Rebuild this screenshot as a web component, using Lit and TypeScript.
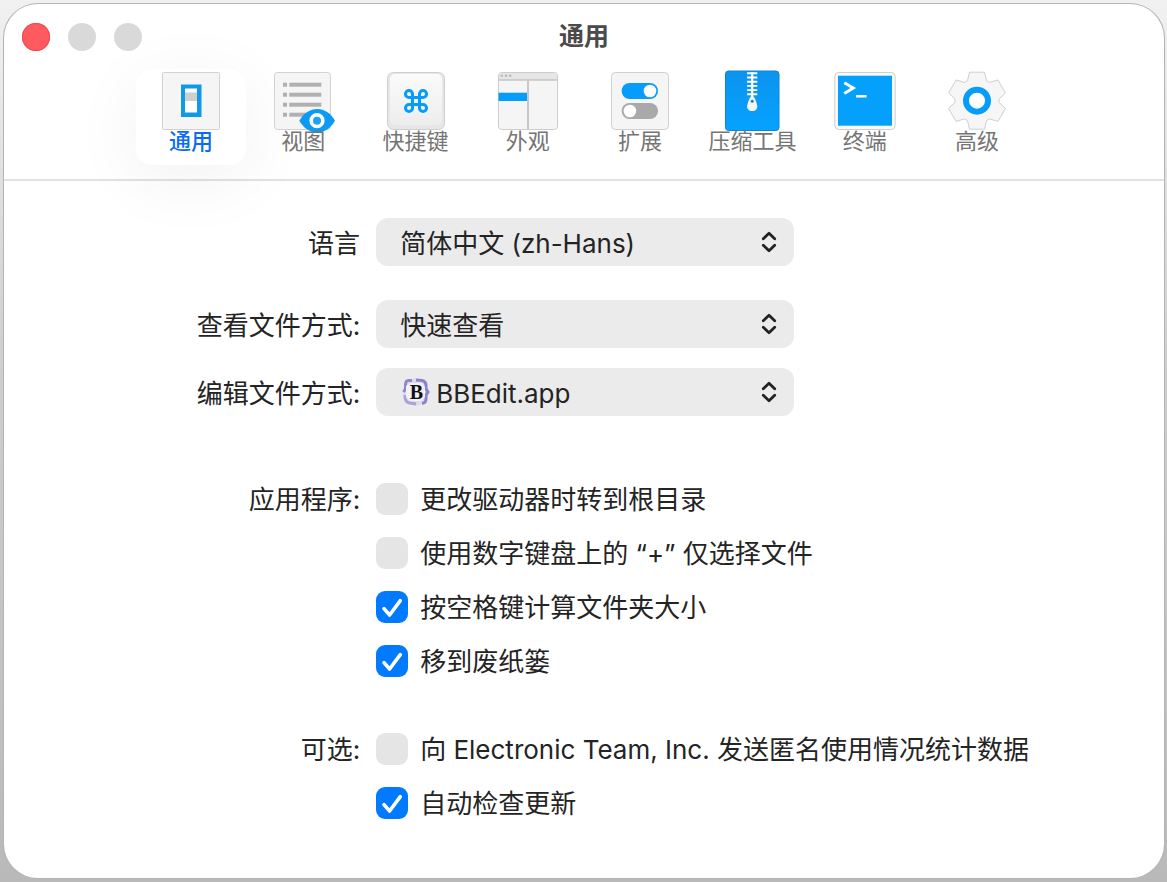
import { LitElement, html, svg, css, nothing, type TemplateResult } from "lit";
import { customElement, property, state } from "lit/decorators.js";
import { classMap } from "lit/directives/class-map.js";

const BLUE = "#069dfa";

/** Outline of a six-toothed gear centred on (cx, cy). */
function gearPath(cx: number, cy: number): string {
  const tooth = [
    [-9.5, -20],
    [-7.5, -28.5],
    [7.5, -28.5],
    [9.5, -20],
  ];
  const points: string[] = [];
  for (let k = 0; k < 6; k++) {
    const a = (k * Math.PI) / 3;
    for (const [x, y] of tooth) {
      const px = cx + x * Math.cos(a) - y * Math.sin(a);
      const py = cy + x * Math.sin(a) + y * Math.cos(a);
      points.push(`${px.toFixed(2)} ${py.toFixed(2)}`);
    }
  }
  return `M${points.join("L")}Z`;
}

const icons: Record<string, TemplateResult> = {
  general: svg`
    <rect x="2.5" y="2.5" width="57" height="57" rx="1" fill="#f5f5f5" stroke="#d2d2d2"/>
    <rect x="21" y="14.5" width="20.5" height="32.5" fill="#0f9ae6"/>
    <rect x="25" y="18.5" width="12" height="24" fill="#fff"/>
    <rect x="25" y="22.5" width="12" height="8.5" fill="#cfcfcf"/>`,
  view: svg`
    <rect x="2.5" y="2.5" width="56" height="57" rx="3" fill="#f5f5f5" stroke="#d2d2d2"/>
    ${[12.7, 22.7, 32.7, 42.7].map(
      (y) => svg`<rect x="11" y=${y} width="4" height="4" fill="#b0b0b0"/>
        <rect x="17.3" y=${y} width="32" height="4" fill="#b0b0b0"/>`
    )}
    <path d="M27.3 50.7C32 43 38 39 45.2 39S58.5 43 63 50.7C58.5 58.5 52.4 62.4 45.2 62.4S32 58.5 27.3 50.7Z" fill="#0b9bf5"/>
    <circle cx="45" cy="50.7" r="5.8" fill="#1ca2f5" stroke="#fff" stroke-width="3.6"/>`,
  shortcuts: svg`
    <defs><linearGradient id="key" x1="0" y1="0" x2="0" y2="1">
      <stop offset="0" stop-color="#fbfbfb"/><stop offset="1" stop-color="#ededed"/>
    </linearGradient></defs>
    <rect x="2.5" y="2.5" width="57" height="57" rx="6" fill="#e6e6e6" stroke="#cfcfcf"/>
    <rect x="5" y="4" width="52" height="51" rx="5" fill="url(#key)"/>
    <g transform="translate(31 31) scale(1.17) translate(-12 -12)">
      <path d="M18 3a3 3 0 0 0-3 3v12a3 3 0 1 0 3-3H6a3 3 0 1 0 3 3V6a3 3 0 1 0-3 3h12a3 3 0 1 0 0-6z" fill="none" stroke=${BLUE} stroke-width="2.6"/>
    </g>`,
  appearance: svg`
    <rect x="1.5" y="2.5" width="59" height="57" rx="3" fill="#f5f5f5" stroke="#cdcdcd"/>
    <path d="M2 10V5.5A2.5 2.5 0 0 1 4.5 3H57.5A2.5 2.5 0 0 1 60 5.5V10Z" fill="#e6e6e6"/>
    <path d="M2 10H60" stroke="#c4c4c4" stroke-width="1.4"/>
    <path d="M31 10V59" stroke="#c8c8c8" stroke-width="2"/>
    <rect x="1.5" y="22.7" width="28.5" height="8.3" fill=${BLUE}/>
    ${[4.8, 9, 13.2].map((x) => svg`<circle cx=${x} cy="5.8" r="1.3" fill="#b9b9b9"/>`)}`,
  extensions: svg`
    <rect x="2.5" y="2.5" width="57" height="57" rx="4" fill="#f5f5f5" stroke="#d0d0d0"/>
    <rect x="12.6" y="13" width="36.4" height="16" rx="8" fill=${BLUE}/>
    <circle cx="41" cy="21" r="6.3" fill="#fff"/>
    <rect x="12.6" y="33" width="36.4" height="16" rx="8" fill="#a9a9a9"/>
    <circle cx="20.9" cy="41" r="6.3" fill="#fff"/>`,
  archive: svg`
    <defs><linearGradient id="zip" x1="0" y1="0" x2="0" y2="1">
      <stop offset="0" stop-color="#0b94ee"/><stop offset="1" stop-color="#06a2ff"/>
    </linearGradient></defs>
    <rect x="4.5" y="1" width="53.5" height="59.5" rx="3" fill="url(#zip)" stroke="#0b86d6"/>
    ${[3.3, 7.5, 11.7, 15.9, 20.1, 24.3].map(
      (y) => svg`<path d="M26.1 ${y}H36.3" stroke="#fff" stroke-width="1.9"/>`
    )}
    <path d="M31.2 2.5V28" stroke="#fff" stroke-width="2.2"/>
    <path d="M31.2 26C33.5 26 35 31 36.2 35.5C36.8 39 34.5 41 31.2 41S25.6 39 26.2 35.5C27.4 31 28.9 26 31.2 26Z" fill="#f4f4f4"/>
    <circle cx="31.2" cy="31.3" r="1.5" fill="#1b7fc4"/>`,
  terminal: svg`
    <rect x=".8" y="2.5" width="60.4" height="57" rx="4" fill="#fafafa" stroke="#cfcfcf"/>
    <rect x="4" y="5.7" width="54" height="50" fill="#04a0fb"/>
    <path d="M10.3 12.8L19.2 18L10.3 23.6" fill="none" stroke="#fff" stroke-width="3"/>
    <path d="M22 26.2H32.6" stroke="#fff" stroke-width="2.5"/>`,
  advanced: svg`
    <path d=${gearPath(31, 30.7)} fill="#f6f6f6" stroke="#cfcfcf" stroke-linejoin="round"/>
    <circle cx="31" cy="30.7" r="11" fill="#fff" stroke=${BLUE} stroke-width="6"/>`,
};

const tabs = [
  { id: "general", label: "通用" },
  { id: "view", label: "视图" },
  { id: "shortcuts", label: "快捷键" },
  { id: "appearance", label: "外观" },
  { id: "extensions", label: "扩展" },
  { id: "archive", label: "压缩工具" },
  { id: "terminal", label: "终端" },
  { id: "advanced", label: "高级" },
];

const bbeditIcon = html`<svg class="app-icon" viewBox="0 0 28 30" aria-hidden="true">
  <path d="M7 3L14 1L22 4L27 12V18L22 26L14 29L6 27L1 18V12Z" fill="#dcdaf3"/>
  <path d="M10 3.5H6.5Q3.5 3.5 3.5 8V12L1.5 15" fill="none" stroke="#8f88c4" stroke-width="3"/>
  <path d="M14 3L20 3.5Q24 4.500 24 8V12L26 15L24 18V22Q24 26 20 26.500" fill="none" stroke="#8c84c6" stroke-width="3"/>
  <path d="M3 18V21Q4 26 8 26L14 27" fill="none" stroke="#a9a3da" stroke-width="3"/>
  <path d="M4 9L8 6H20L23 10V20L19 24H8L4 20Z" fill="#f1f0fb"/>
  <text x="14.500" y="21.500" text-anchor="middle" font-family="Liberation Serif, serif" font-weight="700" font-size="20" fill="#111">B</text>
</svg>`;

@customElement("popup-select")
class PopupSelect extends LitElement {
  @property() label = "";
  @property({ attribute: false }) options: string[] = [];
  @property({ attribute: false }) icon?: TemplateResult;

  static styles = css`
    .field {
      position: relative;
      display: flex;
    }
    select {
      appearance: none;
      width: 100%;
      height: 48px;
      margin: 0;
      padding: 2px 48px 0 24px;
      border: 0;
      border-radius: 12px;
      background: #ebebeb;
      color: #242424;
      font: inherit;
    }
    .with-icon select {
      padding-left: 60px;
    }
    .app-icon {
      position: absolute;
      left: 26px;
      top: 9px;
      width: 28px;
      height: 30px;
      pointer-events: none;
    }
    .arrows {
      position: absolute;
      right: 16px;
      top: 13px;
      width: 18px;
      height: 22px;
      pointer-events: none;
    }
  `;

  render() {
    return html`<div class=${classMap({ field: true, "with-icon": !!this.icon })}>
      <select aria-label=${this.label}>
        ${this.options.map((o) => html`<option>${o}</option>`)}
      </select>
      ${this.icon ?? nothing}
      <svg class="arrows" viewBox="0 0 18 22" fill="none" stroke="#222" stroke-width="2.8" stroke-linecap="round" stroke-linejoin="round" aria-hidden="true">
        <path d="M3.300 7.700L9 2.300L14.700 7.700M3.300 14.300L9 19.700L14.700 14.300"/>
      </svg>
    </div>`;
  }
}

@customElement("check-row")
class CheckRow extends LitElement {
  @property() label = "";
  @property({ type: Boolean }) checked = false;

  static styles = css`
    label {
      display: flex;
      align-items: center;
      gap: 12px;
      line-height: 30px;
    }
    .box {
      display: grid;
      flex: none;
    }
    .box > * {
      grid-area: 1 / 1;
      width: 32px;
      height: 32px;
    }
    input {
      appearance: none;
      margin: 0;
      border-radius: 9px;
      background: #e5e5e5;
    }
    input:checked {
      background: #017afe;
    }
    svg {
      pointer-events: none;
    }
    .text {
      padding-top: 2px;
    }
  `;

  private toggle(e: Event) {
    this.checked = (e.target as HTMLInputElement).checked;
  }

  render() {
    return html`<label>
      <span class="box">
        <input type="checkbox" .checked=${this.checked} @change=${this.toggle} />
        ${this.checked
          ? html`<svg viewBox="0 0 32 32" fill="none" stroke="#fff" stroke-width="3.6" stroke-linecap="round" stroke-linejoin="round" aria-hidden="true">
              <path d="M8 17.600L13.600 24L24.300 9.700"/>
            </svg>`
          : nothing}
      </span>
      <span class="text">${this.label}</span>
    </label>`;
  }
}

@customElement("app-root")
class AppRoot extends LitElement {
  @state() private active = "general";

  static styles = css`
    :host {
      display: flex;
      box-sizing: border-box;
      min-height: 100vh;
      padding: 4px 3px 4px 4px;
      background: linear-gradient(#f1f1f1, #cfcfcf 40%, #b9b9b9);
      color: #242424;
      font-family: Inter, "Noto Sans CJK SC", sans-serif;
      font-size: 26px;
    }
    .window {
      flex: 1;
      min-width: 0;
      border-radius: 34px;
      background: #fff;
      box-shadow: 0 0 0 1px #b4b4b4;
      overflow: hidden;
    }
    header {
      border-bottom: 2px solid #e2e2e2;
      padding-bottom: 14px;
    }
    .titlebar {
      display: grid;
      grid-template-columns: 1fr auto 1fr;
      align-items: center;
      height: 65px;
    }
    .lights {
      display: flex;
      gap: 18px;
      padding-left: 18px;
    }
    .light {
      width: 28px;
      height: 28px;
      padding: 0;
      border: 0;
      border-radius: 50%;
      background: #d9d9d9;
    }
    .light.close {
      background: #fe5a5f;
      box-shadow: inset 0 0 0 1px #ef4a50;
    }
    h1 {
      margin: 0;
      padding-bottom: 2px;
      color: #4a4a4a;
      font-size: 25px;
      font-weight: 700;
      line-height: 32px;
    }
    .tabs {
      display: flex;
      justify-content: space-between;
      padding: 0 132px;
    }
    .tab {
      display: flex;
      flex-direction: column;
      align-items: center;
      width: 110px;
      height: 96px;
      padding: 1px 0 0;
      border: 0;
      border-radius: 16px;
      background: none;
      color: #757575;
      font: inherit;
      font-size: 22px;
      line-height: 18px;
    }
    .tab.active {
      background: #fff;
      color: #0a6cf0;
      font-weight: 500;
      box-shadow: 0 14px 70px rgba(0, 0, 0, 0.06);
    }
    .tab svg {
      flex: none;
      width: 62px;
      height: 62px;
      overflow: visible;
    }
    .form {
      display: grid;
      grid-template-columns: 5fr 11fr;
      column-gap: 14px;
      padding: 37px 0 56px;
    }
    .name {
      text-align: right;
      line-height: 48px;
      padding: 2px 2px 0 0;
    }
    .name.short {
      line-height: 30px;
    }
    popup-select {
      max-width: 418px;
      height: 48px;
      margin-bottom: 20px;
    }
    .spaced {
      margin-bottom: 34px;
    }
    .group {
      display: flex;
      flex-direction: column;
      gap: 22px;
    }
    .group.first {
      padding-bottom: 56px;
    }
    .divider {
      grid-column: 1 / -1;
      height: 47px;
    }
  `;

  render() {
    return html`<main class="window">
      <header>
        <div class="titlebar">
          <div class="lights">
            <button class="light close" aria-label="关闭"></button>
            <button class="light" aria-label="最小化"></button>
            <button class="light" aria-label="缩放"></button>
          </div>
          <h1>通用</h1>
        </div>
        <nav class="tabs">
          ${tabs.map(
            (t) => html`<button
              class=${classMap({ tab: true, active: t.id === this.active })}
              @click=${() => (this.active = t.id)}
            >
              <svg viewBox="0 0 62 62" aria-hidden="true">${icons[t.id]}</svg>
              <span>${t.label}</span>
            </button>`
          )}
        </nav>
      </header>
      <section class="form">
        <div class="name">语言</div>
        <popup-select class="spaced" label="语言" .options=${["简体中文 (zh-Hans)"]}></popup-select>
        <div class="name">查看文件方式:</div>
        <popup-select label="查看文件方式" .options=${["快速查看"]}></popup-select>
        <div class="name">编辑文件方式:</div>
        <popup-select label="编辑文件方式" .options=${["BBEdit.app"]} .icon=${bbeditIcon}></popup-select>
        <div class="divider"></div>
        <div class="name short">应用程序:</div>
        <div class="group first">
          <check-row label="更改驱动器时转到根目录"></check-row>
          <check-row label="使用数字键盘上的 “+” 仅选择文件"></check-row>
          <check-row label="按空格键计算文件夹大小" checked></check-row>
          <check-row label="移到废纸篓" checked></check-row>
        </div>
        <div class="name short">可选:</div>
        <div class="group">
          <check-row label="向 Electronic Team, Inc. 发送匿名使用情况统计数据"></check-row>
          <check-row label="自动检查更新" checked></check-row>
        </div>
      </section>
    </main>`;
  }
}
